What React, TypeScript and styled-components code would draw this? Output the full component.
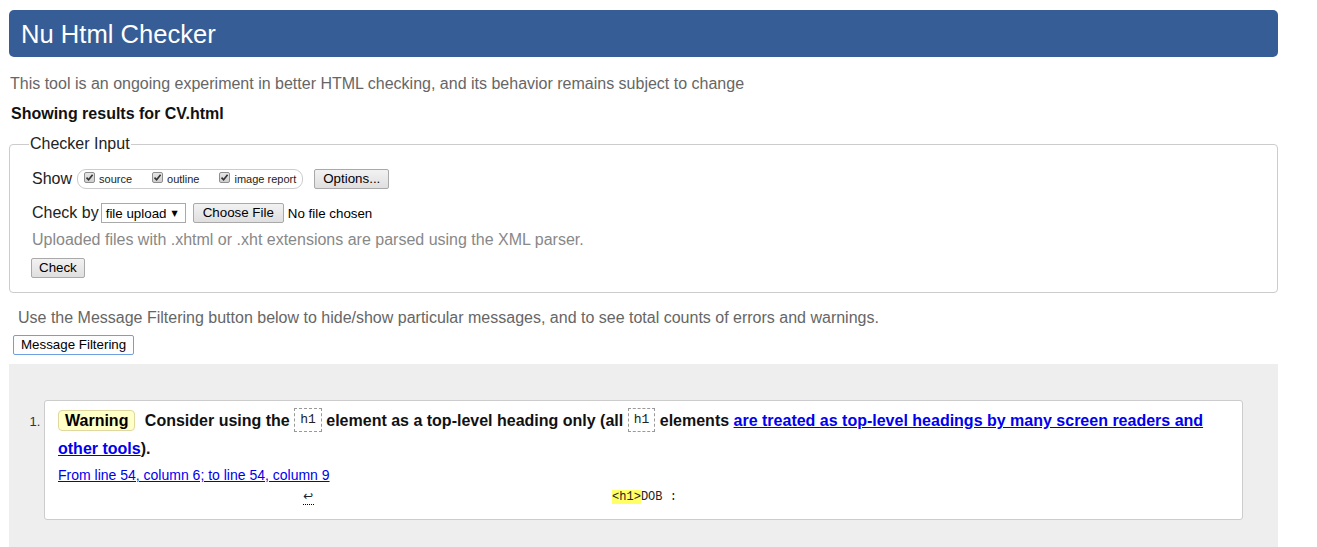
import React from "react";
import styled, { createGlobalStyle } from "styled-components";

const Global = createGlobalStyle`
  html, body { margin: 0; padding: 0; background: #fff; }
  body { font-family: "Liberation Sans", Arial, sans-serif; color: #222; }
  * { box-sizing: border-box; }
`;

const Page = styled.div`
  width: 1278px;
  padding: 10px 0 0 9px;
`;

const Header = styled.header`
  height: 47px;
  background: #365d95;
  border-radius: 5px;
  display: flex;
  align-items: center;
  padding-left: 12px;
`;

const Title = styled.h1`
  margin: 0;
  font-size: 25.6px;
  font-weight: normal;
  line-height: 30px;
  color: #fff;
`;

const Intro = styled.p`
  margin: 17px 0 0 1px;
  font-size: 16px;
  line-height: 20px;
  color: #666;
`;

const ResultsFor = styled.h2`
  margin: 10px 0 0 2px;
  font-size: 16px;
  line-height: 20px;
  font-weight: bold;
  color: #111;
`;

const Fieldset = styled.fieldset`
  margin: 10px 0 0;
  padding: 14px 22px 14px;
  border: 1px solid #ccc;
  border-radius: 4px;
  min-width: 0;
`;

const Legend = styled.legend`
  font-size: 16px;
  line-height: 20px;
  padding: 0 1px;
  margin-left: -3px;
  color: #222;
`;

const FormRow = styled.div<{ $mt?: number; $h?: number }>`
  display: flex;
  align-items: center;
  height: ${(p) => p.$h ?? 22}px;
  margin-top: ${(p) => p.$mt ?? 0}px;
  font-size: 16px;
  color: #222;
`;

const RowLabel = styled.span<{ $mr?: number }>`
  font-size: 16px;
  margin-right: ${(p) => p.$mr ?? 4}px;
`;

const CheckGroup = styled.span`
  display: inline-flex;
  align-items: center;
  height: 20px;
  padding: 0 6px;
  border: 1px solid #ccc;
  border-radius: 9px;
  margin-left: 1px;
`;

const CheckItem = styled.label<{ $first?: boolean }>`
  display: inline-flex;
  align-items: center;
  margin-left: ${(p) => (p.$first ? 0 : 20)}px;
  font-size: 11px;
  line-height: 14px;
  color: #222;
`;

const Box = styled.span`
  display: inline-flex;
  align-items: center;
  justify-content: center;
  width: 11px;
  height: 11px;
  border: 1px solid #8e8e8e;
  border-radius: 2px;
  background: linear-gradient(#e6e6e6, #cfcfcf);
  margin: 0 4px 4px 0;
`;

const Btn = styled.button<{ $ml?: number; $px?: number; $focus?: boolean }>`
  height: 20px;
  padding: 0 ${(p) => p.$px ?? 7}px;
  margin-left: ${(p) => p.$ml ?? 0}px;
  font-family: "Liberation Sans", Arial, sans-serif;
  font-size: 13.333px;
  line-height: 18px;
  color: #000;
  border: 1px solid ${(p) => (p.$focus ? "#6e9fe0" : "#a9a9a9")};
  border-radius: 2px;
  background: ${(p) => (p.$focus ? "#fdfdfd" : "linear-gradient(#f2f2f2, #dfdfdf)")};
`;

const SelectBox = styled.span`
  display: inline-flex;
  align-items: center;
  justify-content: space-between;
  width: 85px;
  height: 20px;
  padding: 0 7px 0 4px;
  border: 1px solid #a9a9a9;
  background: #fff;
  font-size: 13.333px;
  color: #000;
`;

const Arrow = styled.span`
  font-family: "DejaVu Sans", sans-serif;
  font-size: 8px;
`;

const Plain = styled.span<{ $ml?: number }>`
  font-size: 13.333px;
  margin-left: ${(p) => p.$ml ?? 0}px;
  color: #000;
`;

const Note = styled.span`
  font-size: 16px;
  color: #888;
`;

const Hint = styled.p`
  margin: 15px 0 0 9px;
  font-size: 16px;
  line-height: 20px;
  color: #666;
`;

const FilterRow = styled.div`
  margin: 7px 0 0 4px;
  height: 20px;
  display: flex;
`;

const Results = styled.section`
  margin-top: 9px;
  background: #eee;
  padding: 36px 35px 40px 35px;
`;

const List = styled.ol`
  margin: 0;
  padding: 0;
  list-style: decimal outside;
`;

const Card = styled.li`
  background: #fff;
  border: 1px solid #ccc;
  border-radius: 3px;
  padding: 6px 13px 13px;
  font-size: 16px;
  &::marker {
    font-size: 13px;
    font-weight: normal;
    color: #333;
  }
`;

const Message = styled.p`
  margin: 0;
  font-weight: bold;
  line-height: 28px;
  color: #111;
`;

const Badge = styled.span`
  display: inline-block;
  vertical-align: middle;
  margin-top: -3px;
  padding: 0 6px;
  line-height: 19px;
  border: 1px solid #e1d8a1;
  border-radius: 4px;
  background: #ffffc8;
  margin-right: 5px;
  color: #000;
`;

const Code = styled.code`
  display: inline-block;
  vertical-align: middle;
  margin-top: -3px;
  padding: 0 5px;
  line-height: 22px;
  border: 1px dashed #999;
  font-family: "Liberation Mono", "DejaVu Sans Mono", monospace;
  font-size: 13px;
  font-weight: normal;
  color: #222;
`;

const Link = styled.a`
  color: #0000ee;
  text-decoration: underline;
`;

const Location = styled.a`
  display: block;
  margin-top: 2px;
  font-size: 14px;
  line-height: 20px;
  color: #0000ee;
  text-decoration: underline;
`;

const Extract = styled.code`
  display: block;
  margin-top: 3px;
  font-family: "Liberation Mono", "DejaVu Sans Mono", monospace;
  font-size: 12px;
  line-height: 18px;
  white-space: pre;
  color: #222;
`;

const LineBreak = styled.span`
  display: inline-block;
  width: 11px;
  margin-right: 3px;
  line-height: 12px;
  padding-bottom: 2px;
  font-family: "DejaVu Sans", sans-serif;
  font-size: 12px;
  text-align: center;
  border-bottom: 1px dotted #000;
`;

const Mark = styled.b`
  font-weight: normal;
  background: #ffff66;
`;

const Check = () => (
  <Box>
    <svg width="9" height="9" viewBox="0 0 9 9">
      <path d="M1.5 4.6 L3.6 6.8 L7.6 1.8" fill="none" stroke="#333" strokeWidth="1.6" />
    </svg>
  </Box>
);

export default function App() {
  return (
    <>
      <Global />
      <Page>
        <Header>
          <Title>Nu Html Checker</Title>
        </Header>
        <Intro>
          This tool is an ongoing experiment in better HTML checking, and its behavior remains subject to change
        </Intro>
        <ResultsFor>Showing results for CV.html</ResultsFor>
        <Fieldset>
          <Legend>Checker Input</Legend>
          <FormRow>
            <RowLabel>Show</RowLabel>
            <CheckGroup>
              <CheckItem $first>
                <Check />
                source
              </CheckItem>
              <CheckItem>
                <Check />
                outline
              </CheckItem>
              <CheckItem>
                <Check />
                image report
              </CheckItem>
            </CheckGroup>
            <Btn $ml={11} $px={8}>Options...</Btn>
          </FormRow>
          <FormRow $mt={12}>
            <RowLabel $mr={2}>Check by</RowLabel>
            <SelectBox>
              file upload <Arrow>▼</Arrow>
            </SelectBox>
            <Btn $ml={7} $px={9}>Choose File</Btn>
            <Plain $ml={4}>No file chosen</Plain>
          </FormRow>
          <FormRow $mt={6} $h={20}>
            <Note>Uploaded files with .xhtml or .xht extensions are parsed using the XML parser.</Note>
          </FormRow>
          <FormRow $mt={8} $h={20}>
            <Btn $ml={-1}>Check</Btn>
          </FormRow>
        </Fieldset>
        <Hint>
          Use the Message Filtering button below to hide/show particular messages, and to see total counts of errors and warnings.
        </Hint>
        <FilterRow>
          <Btn $focus>Message Filtering</Btn>
        </FilterRow>
        <Results>
          <List>
            <Card>
              <Message>
                <Badge>Warning</Badge> Consider using the <Code>h1</Code> element as a top-level heading only (all{" "}
                <Code>h1</Code> elements{" "}
                <Link href="#">are treated as top-level headings by many screen readers and other tools</Link>).
              </Message>
              <Location href="#">From line 54, column 6; to line 54, column 9</Location>
              <Extract>
                {" ".repeat(34)}
                <LineBreak>↩</LineBreak>
                {" ".repeat(41)}
                <Mark>&lt;h1&gt;</Mark>DOB :
              </Extract>
            </Card>
          </List>
        </Results>
      </Page>
    </>
  );
}
